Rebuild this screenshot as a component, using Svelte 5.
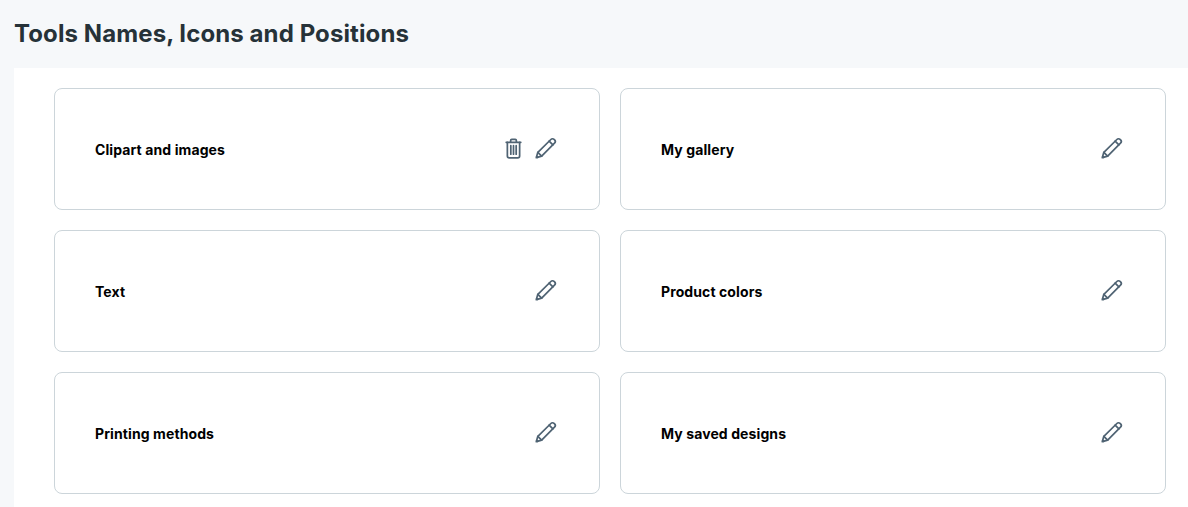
<script>
  const tools = [
    { name: 'Clipart and images', removable: true },
    { name: 'My gallery' },
    { name: 'Text' },
    { name: 'Product colors' },
    { name: 'Printing methods' },
    { name: 'My saved designs' },
  ];
</script>

<div class="page">
  <h1>Tools Names, Icons and Positions</h1>
  <div class="panel">
    <div class="grid">
      {#each tools as tool}
        <div class="card">
          <span class="name">{tool.name}</span>
          <div class="actions">
            {#if tool.removable}
              <svg width="23" height="23" viewBox="0 0 24 24" fill="none" stroke="#4f6373" stroke-width="1.8" stroke-linecap="round" stroke-linejoin="round">
                <path d="M4.4 5.5h15.2" />
                <path d="M9 5.2V3.8c0-.7.5-1.3 1.2-1.3h3.6c.7 0 1.2.6 1.2 1.3v1.4" />
                <path d="M5.6 5.5v14.3c0 1.2.9 2 2 2h8.8c1.1 0 2-.8 2-2V5.5" />
                <path d="M9.2 9v9M12 9v9M14.8 9v9" />
              </svg>
            {/if}
            <svg width="23" height="23" viewBox="0 0 24 24" fill="none" stroke="#4f6373" stroke-width="1.8" stroke-linecap="round" stroke-linejoin="round">
              <path d="M2.4 21.6l1.6-5.6L17.6 2.6c1-1 2.4-1 3.3-.1l.6.6c.9.9.9 2.3-.1 3.3L8 20 2.4 21.6z" />
              <path d="M15.8 4.4l3.9 3.9" />
              <path d="M4 16l4 4" />
              <path d="M2.8 20.4l1 1" />
            </svg>
          </div>
        </div>
      {/each}
    </div>
  </div>
</div>

<style>
  :global(body) {
    margin: 0;
    background: #f6f8fa;
    font-family: Inter, 'Liberation Sans', sans-serif;
  }

  .page {
    height: 507px;
    overflow: hidden;
  }

  h1 {
    margin: 0;
    height: 68px;
    padding-left: 14px;
    box-sizing: border-box;
    font-size: 24px;
    line-height: 67px;
    font-weight: 700;
    letter-spacing: 0.1px;
    color: #263238;
  }

  .panel {
    margin-left: 14px;
    padding: 20px 22px 20px 40px;
    background: #fff;
  }

  .grid {
    display: grid;
    grid-template-columns: 1fr 1fr;
    gap: 20px;
  }

  .card {
    display: flex;
    align-items: center;
    justify-content: space-between;
    height: 122px;
    box-sizing: border-box;
    padding: 0 42px 0 40px;
    background: #fff;
    border: 1px solid #ccd5da;
    border-radius: 8px;
  }

  .name {
    font-size: 14px;
    font-weight: 700;
    letter-spacing: 0.1px;
    color: #000;
  }

  .actions {
    display: flex;
    align-items: center;
    gap: 9px;
    margin-bottom: 2px;
  }

  svg {
    display: block;
  }
</style>
